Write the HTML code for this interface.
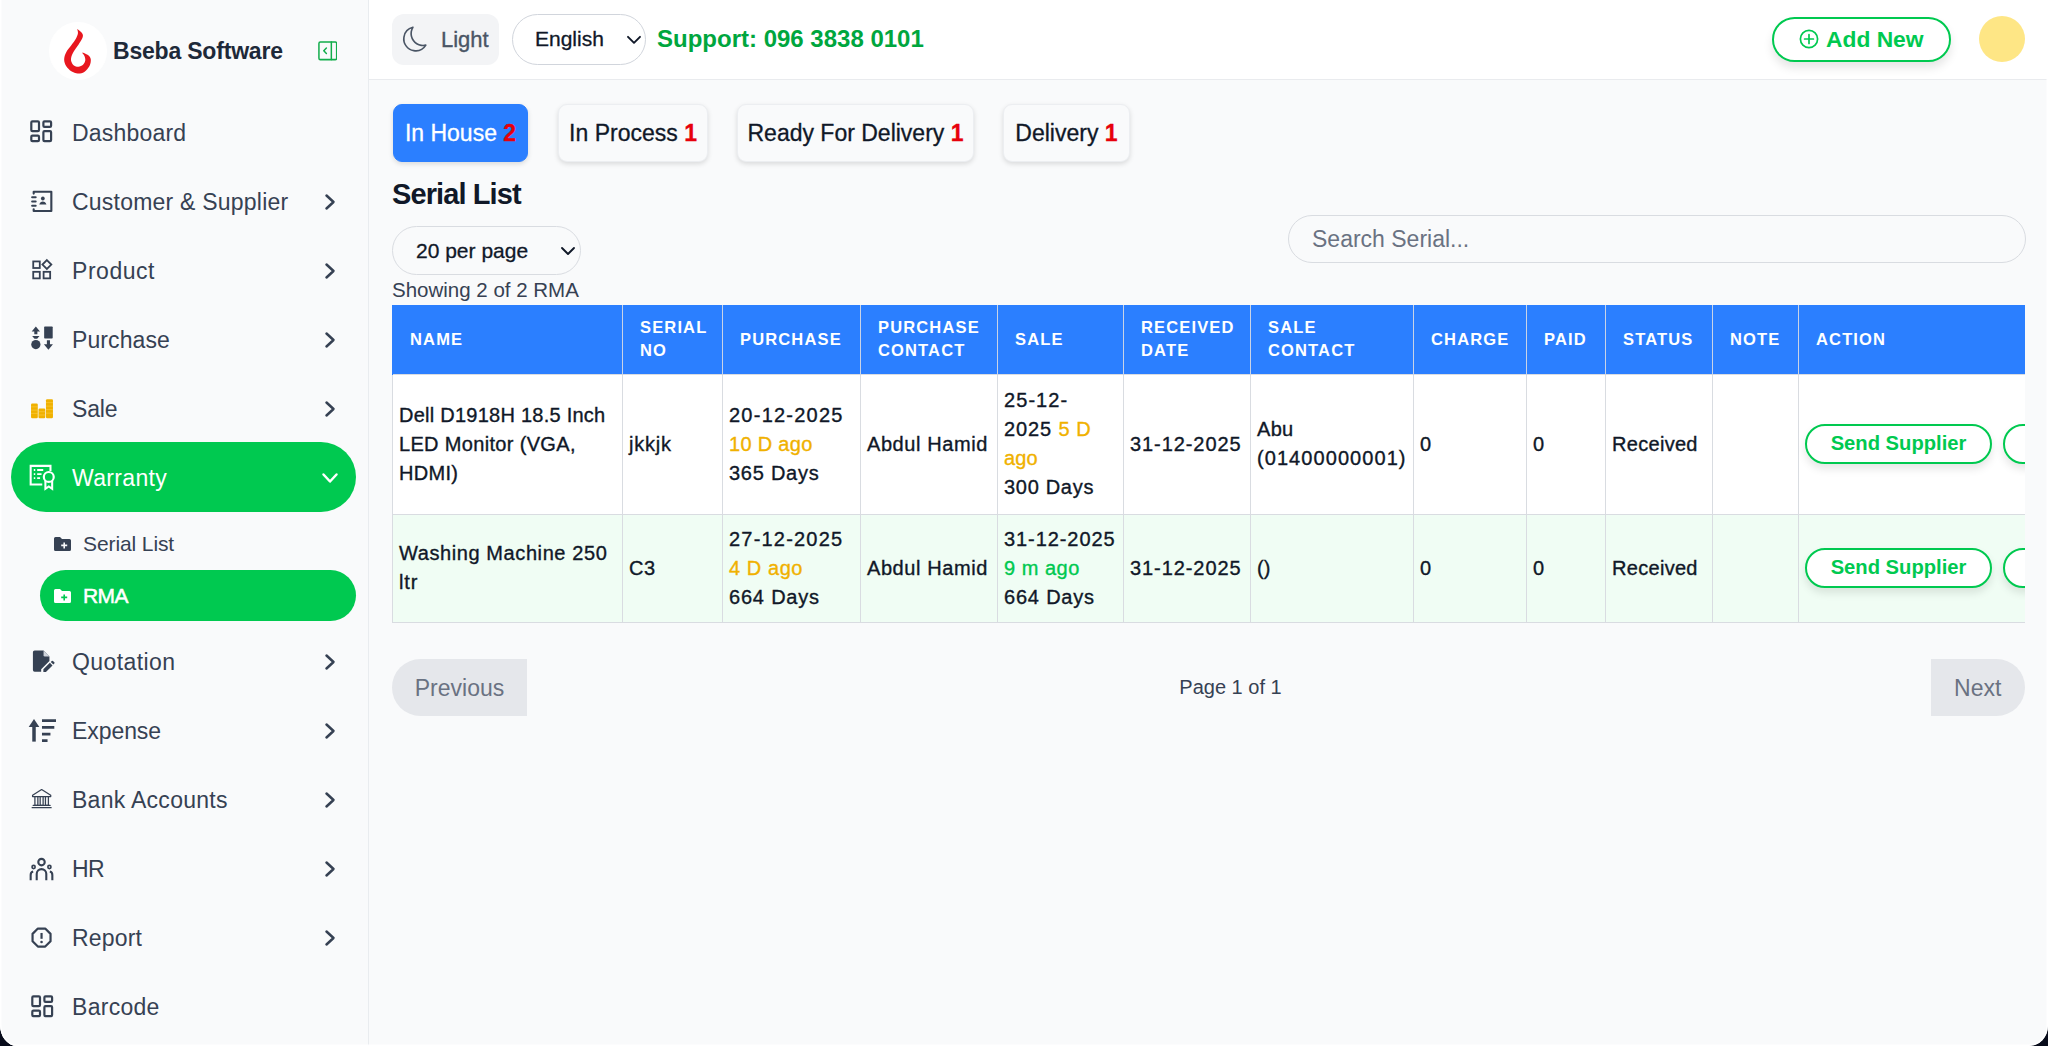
<!DOCTYPE html>
<html lang="en">
<head>
<meta charset="utf-8">
<title>Bseba Software - RMA</title>
<style>
*{box-sizing:border-box;margin:0;padding:0}
html,body{width:2048px;height:1046px;overflow:hidden;background:#080c1b}
body{font-family:"Liberation Sans",sans-serif;color:#101828;position:relative}
#win{position:absolute;left:0;top:0;width:2048px;height:1046px;background:#f9fafb;border-radius:0 0 19px 17px / 0 0 20px 21px;overflow:hidden}
#ring{position:absolute;left:0;top:-30px;width:2048px;height:1076px;border-radius:0 0 19px 17px / 0 0 20px 21px;box-shadow:inset 0 0 0 1.500px rgba(255,255,255,.95);pointer-events:none;z-index:50}
.abs{position:absolute}
/* ---------- sidebar ---------- */
#side{position:absolute;left:0;top:0;width:369px;height:1046px;background:#f9fafb;border-right:1.200px solid #e9ecef}
#logo{position:absolute;left:49px;top:22.300px;width:57.500px;height:57.500px;border-radius:50%;background:#fff}
#brand{position:absolute;left:113px;top:36px;font-size:23px;font-weight:700;color:#1e2939;line-height:30px;white-space:nowrap;letter-spacing:-0.2px}
.mi{position:absolute;left:11px;width:345px;height:69px;border-radius:35px;color:#364153}
.mi .t{position:absolute;left:61px;top:0;line-height:69px;font-size:23px;white-space:nowrap}
.mi svg.ic{position:absolute;left:17px;top:21px;width:28px;height:28px}
.mi svg.ch{position:absolute;left:311px;top:26px;width:16px;height:18px}
.mi.on{background:#00c950;color:#fff}
.sub{position:absolute;left:40px;width:316px;height:51px;border-radius:26px;color:#364153}
.sub .t{position:absolute;left:43px;top:0;line-height:52px;font-size:21px;white-space:nowrap}
.sub svg{position:absolute;left:13.500px;top:18.500px;width:17px;height:14px}
.sub.on{background:#00c950;color:#fff}
/* ---------- header ---------- */
#top{position:absolute;left:369px;top:0;width:1679px;height:80.300px;background:#fff;border-bottom:1.300px solid #e9ebee}
#light{position:absolute;left:392px;top:14px;width:107px;height:51px;border-radius:12px;background:#f3f4f6}
#light svg{position:absolute;left:8.200px;top:10.800px;width:29.300px;height:29.300px}
#light span{position:absolute;left:49px;top:0;line-height:51px;font-size:22px;color:#4a5565;font-weight:400;-webkit-text-stroke:.35px}
#lang{position:absolute;left:512px;top:14px;width:134px;height:51px;border-radius:26px;border:1.5px solid #d1d5dc;background:#fff}
#lang svg{position:absolute;left:112.500px;top:20px;width:16px;height:10px}
#lang span{position:absolute;left:22px;top:0;line-height:48px;font-size:21px;color:#101828;-webkit-text-stroke:.3px}
#support{position:absolute;left:657px;top:0;line-height:78px;font-size:24px;font-weight:700;color:#00a63e;white-space:nowrap}
#addnew{position:absolute;left:1772px;top:17px;width:179px;height:45px;border-radius:23px;border:2.500px solid #00c950;background:#fff;box-shadow:0 6px 10px rgba(0,0,0,.10)}
#addnew svg{position:absolute;left:24.500px;top:9.500px;width:20px;height:20px}
#addnew span{position:absolute;left:52px;top:0;line-height:40px;font-size:22.800px;font-weight:700;color:#00c950;white-space:nowrap}
#avatar{position:absolute;left:1979px;top:16px;width:46px;height:46px;border-radius:50%;background:#fee685}
/* ---------- main ---------- */
.tab{position:absolute;top:104px;height:58px;border-radius:9px;background:#f9fafb;border:1px solid #eceef1;box-shadow:0 2px 5px rgba(0,0,0,.13);text-align:center;white-space:nowrap}
.tab span{line-height:56px;font-size:23px;color:#101828;-webkit-text-stroke:.3px}
.tab b{color:#e7000b;font-weight:700}
.tab.on{background:#2b7fff;border-color:#2b7fff}
.tab.on span{color:#fff}
#h1{position:absolute;left:392px;top:174px;line-height:40px;font-size:29px;font-weight:700;color:#101828;white-space:nowrap;letter-spacing:-.9px}
#perpage{position:absolute;left:392px;top:226px;width:189px;height:49px;border-radius:25px;border:1.5px solid #d9dce1;background:#f9fafb}
#perpage span{position:absolute;left:23px;top:0;line-height:47px;font-size:21px;color:#101828;-webkit-text-stroke:.3px}
#perpage svg{position:absolute;left:167px;top:19px;width:16px;height:10px}
#search{position:absolute;left:1288px;top:215px;width:738px;height:48px;border-radius:24px;border:1.5px solid #d9dce1;background:#f9fafb}
#search span{position:absolute;left:23px;top:0;line-height:46px;font-size:23px;color:#6a7282}
#showing{position:absolute;left:392px;top:276px;line-height:28px;font-size:20.500px;color:#364153;white-space:nowrap}
#twrap{position:absolute;left:392px;top:305px;width:1633px;height:320px;overflow:hidden}
#tbl{border-collapse:collapse;table-layout:fixed;width:1826px}
#tbl th{background:#2b7fff;color:#fff;height:69px;text-align:left;vertical-align:middle;padding:0 6px 0 17px;font-size:16.500px;font-weight:700;letter-spacing:1.150px;line-height:23px;border-left:1.5px solid #c9d3e6;border-right:1.5px solid #c9d3e6}
#tbl th:first-child{border-left:1.5px solid #2b7fff}
#tbl td{border:1.5px solid #d9dce1;padding:0 4px 0 6px;font-size:20px;line-height:29px;color:#101828;vertical-align:middle;white-space:nowrap;-webkit-text-stroke:.35px}
#tbl tr.r1 td{height:140px;background:#fff}
#tbl tr.r2 td{height:108px;background:#f0fdf4}
#tbl i{font-style:normal}
#tbl i.y{color:#f0b100}
#tbl i.g{color:#00c950}
#tbl td.act{padding-left:6px}
.btn{display:inline-block;vertical-align:middle;width:187px;height:39.500px;border-radius:20px;border:2.300px solid #00c950;background:#fff;color:#00c950;font-weight:700;font-size:20.200px;line-height:35px;-webkit-text-stroke:0;text-align:center;box-shadow:0 5px 8px rgba(0,0,0,.10)}
.btn.b2{margin-left:11px;width:120px}
#prev,#next{position:absolute;top:658.500px;height:57.500px;background:#e5e7eb;color:#6a7282;font-size:23px;text-align:center}
#prev{left:392px;width:135px;border-radius:29px 0 0 29px}
#next{left:1930.500px;width:94.500px;border-radius:0 29px 29px 0}
#prev span,#next span{line-height:59px}
#pageof{position:absolute;left:1130.500px;width:200px;text-align:center;top:673px;line-height:28px;font-size:20px;color:#364153}
</style>
</head>
<body>
<div id="win">
<div id="side">
  <div id="logo"></div>
  <svg class="abs" style="left:44px;top:18px;width:68px;height:68px" viewBox="0 0 68 68"><path fill="#e8171f" d="M33.16 11.05C33.29 11.76 34.16 13.65 33.94 15.28C33.72 16.91 32.96 18.80 31.86 20.81C30.75 22.81 28.93 25.03 27.31 27.31C25.68 29.58 23.30 32.08 22.11 34.46C20.91 36.84 20.16 39.34 20.16 41.61C20.16 43.89 20.91 46.16 22.11 48.11C23.30 50.07 25.36 52.07 27.31 53.32C29.26 54.56 31.64 55.48 33.81 55.59C35.98 55.70 38.36 55.21 40.31 53.97C42.26 52.72 44.43 50.17 45.51 48.11C46.60 46.06 46.92 43.35 46.81 41.61C46.71 39.88 45.84 38.74 44.86 37.71C43.89 36.68 42.15 35.98 40.96 35.44C39.77 34.89 38.25 34.62 37.71 34.46C38.14 35.00 39.72 36.41 40.31 37.71C40.91 39.01 41.50 40.75 41.29 42.26C41.07 43.78 40.15 45.73 39.01 46.81C37.87 47.90 35.98 48.66 34.46 48.76C32.94 48.87 31.10 48.33 29.91 47.46C28.72 46.60 27.74 44.97 27.31 43.56C26.87 42.15 26.87 40.75 27.31 39.01C27.74 37.28 28.72 35.22 29.91 33.16C31.10 31.10 33.11 28.72 34.46 26.66C35.81 24.60 37.30 22.43 38.04 20.81C38.77 19.18 39.04 18.04 38.88 16.91C38.72 15.77 38.01 14.95 37.06 13.98C36.11 13.00 33.81 11.54 33.16 11.05Z"/></svg>
  <div id="brand">Bseba Software</div>
  <svg id="toggle" class="abs" style="left:317.800px;top:41.300px;width:19.600px;height:19.600px" viewBox="0 0 21 20" preserveAspectRatio="none" fill="none" stroke="#12ad4b" stroke-width="1.600" stroke-linejoin="round" stroke-linecap="round"><rect x="1" y="1" width="19" height="18" rx="1.500"/><path d="M14.300 1v18"/><path d="M9 7.200L6.200 10L9 12.800"/></svg>
  <div class="mi" style="top:98px;height:69px"><svg class="ic" style="left:17.40px;top:20.20px;width:26.4px;height:26.4px" viewBox="0 0 24 24" fill="none" stroke="currentColor" stroke-width="2" stroke-linejoin="round"><rect x="3" y="3" width="7" height="9" rx="1"/><rect x="14" y="3" width="7" height="5" rx="1"/><rect x="14" y="12" width="7" height="9" rx="1"/><rect x="3" y="16" width="7" height="5" rx="1"/></svg><span class="t" style="line-height:71px;letter-spacing:0.19px">Dashboard</span></div>
  <div class="mi" style="top:167px;height:69px"><svg class="ic" style="left:17.52px;top:20.65px;width:26.8px;height:26.8px" viewBox="0 0 24 24" fill="none" stroke="currentColor" stroke-width="1.9" stroke-linecap="round" stroke-linejoin="round"><path d="M4.200 5V3.400H20v17.200H4.200V19"/><path d="M2.800 8.200h3.200M2.800 12h3.200M2.800 15.800h3.200" stroke-width="1.800"/><circle cx="12.400" cy="9.400" r="1.700" fill="currentColor" stroke="none"/><path d="M9.200 14.800c.500-2 1.700-2.800 3.200-2.800s2.700.800 3.200 2.800z" fill="currentColor" stroke="none"/></svg><span class="t" style="line-height:71px;letter-spacing:0.22px">Customer &amp; Supplier</span><svg class="ch" viewBox="0 0 16 18" fill="none" stroke="currentColor" stroke-width="2.5" stroke-linecap="round" stroke-linejoin="round"><path d="M4.5 2.5L11.5 9L4.500 15.500"/></svg></div>
  <div class="mi" style="top:236px;height:69px"><svg class="ic" style="left:17.62px;top:21.43px;width:25.4px;height:25.4px" viewBox="0 0 24 24" fill="none" stroke="currentColor" stroke-width="1.700" stroke-linejoin="miter"><rect x="4" y="4.200" width="6.200" height="6.200"/><rect x="4" y="14" width="6.200" height="6.200"/><rect x="13.800" y="14" width="6.200" height="6.200"/><path d="M16.900 2.900l4.200 4.200-4.200 4.200-4.200-4.200z"/></svg><span class="t" style="line-height:71px;letter-spacing:0.54px">Product</span><svg class="ch" viewBox="0 0 16 18" fill="none" stroke="currentColor" stroke-width="2.5" stroke-linecap="round" stroke-linejoin="round"><path d="M4.5 2.5L11.5 9L4.500 15.500"/></svg></div>
  <div class="mi" style="top:305px;height:69px"><svg class="ic" style="left:16.65px;top:19.37px;width:28.5px;height:28.5px" viewBox="0 0 24 24" fill="currentColor" stroke="none"><path d="M6.600 2.200l3.500 4.100H7.900v2.300H5.300V6.300H3.100z"/><path d="M3.500 10h6.200l-2 2.500h-2.200z"/><circle cx="6.600" cy="17.300" r="3.900"/><rect x="13.600" y="2.200" width="7.200" height="10" rx=".600"/><path d="M15.900 13.600h2.600v3.400h2.500l-3.800 4.600-3.800-4.600h2.500z"/></svg><span class="t" style="line-height:71px;letter-spacing:0.10px">Purchase</span><svg class="ch" viewBox="0 0 16 18" fill="none" stroke="currentColor" stroke-width="2.5" stroke-linecap="round" stroke-linejoin="round"><path d="M4.5 2.5L11.5 9L4.500 15.500"/></svg></div>
  <div class="mi" style="top:374px;height:69px"><svg class="ic" style="left:16.75px;top:19.60px;width:28.0px;height:28.0px" viewBox="0 0 24 24" fill="#f0b100" stroke="none"><rect x="2.600" y="8.200" width="5.800" height="12.600" rx="1"/><rect x="9" y="12.400" width="5.800" height="8.400" rx="1"/><rect x="15.400" y="4.400" width="6" height="16.400" rx="1"/><g stroke="#ffd966" stroke-width=".5" opacity=".75"><path d="M2.600 11h5.800M2.600 13.800h5.800M2.600 16.600h5.800M9 15.200h5.800M9 18h5.800M15.400 7.400h6M15.400 10.400h6M15.400 13.400h6M15.400 16.400h6"/></g></svg><span class="t" style="line-height:71px;letter-spacing:-0.20px">Sale</span><svg class="ch" viewBox="0 0 16 18" fill="none" stroke="currentColor" stroke-width="2.5" stroke-linecap="round" stroke-linejoin="round"><path d="M4.5 2.5L11.5 9L4.500 15.500"/></svg></div>
  <div class="mi on" style="top:442px;height:70px"><svg class="ic" style="left:16.94px;top:20.04px;width:29.0px;height:29.0px" viewBox="0 0 24 24" fill="none" stroke="currentColor" stroke-width="1.700" stroke-linejoin="miter"><path d="M11.800 18.600H2.200V3.200h16.400v4.200"/><path d="M4.800 6.600h1.200M7.600 6.600h5M4.800 10h1.200M7.600 10h3.600M4.800 13.400h1.200M7.600 13.400h2.400" stroke-width="1.500"/><circle cx="17.200" cy="12.400" r="4.100" stroke-width="1.800"/><path d="M14.400 15.800v6.400l2.800-2 2.800 2v-6.400" stroke-width="1.700"/></svg><span class="t" style="line-height:72px;letter-spacing:0.33px">Warranty</span><svg class="ch" viewBox="0 0 18 16" style="left:310px;top:27.500px;width:18px;height:16px" fill="none" stroke="currentColor" stroke-width="2.500" stroke-linecap="round" stroke-linejoin="round"><path d="M2.500 4.500L9 11.500L15.500 4.500"/></svg></div>
  <div class="sub" style="top:518px"><svg viewBox="0 0 17 14" fill="currentColor" fill-rule="evenodd"><path d="M1.500 0H6L8 2H15.500A1.500 1.500 0 0 1 17 3.500V12.500A1.500 1.500 0 0 1 15.500 14H1.500A1.500 1.500 0 0 1 0 12.500V1.500A1.500 1.500 0 0 1 1.500 0ZM9.400 5.400h1.600v2.200h2.200v1.600h-2.200v2.200h-1.600v-2.200h-2.200v-1.600h2.200z"/></svg><span class="t" style="letter-spacing:-.1px">Serial List</span></div>
  <div class="sub on" style="top:570px"><svg viewBox="0 0 17 14" fill="currentColor" fill-rule="evenodd"><path d="M1.500 0H6L8 2H15.500A1.500 1.500 0 0 1 17 3.500V12.500A1.500 1.500 0 0 1 15.500 14H1.500A1.500 1.500 0 0 1 0 12.500V1.500A1.500 1.500 0 0 1 1.500 0ZM9.400 5.400h1.600v2.200h2.200v1.600h-2.200v2.200h-1.600v-2.200h-2.200v-1.600h2.200z"/></svg><span class="t" style="letter-spacing:-.6px;-webkit-text-stroke:.5px #fff">RMA</span></div>
  <div class="mi" style="top:627px;height:69px"><svg class="ic" style="left:17.71px;top:21.38px;width:26.1px;height:26.1px" viewBox="0 0 24 24" fill="currentColor" stroke="none"><path d="M5.200 2.400h8.200l5.400 5.400v4.200l-7.600 7.600v2.200H5.200a1.600 1.600 0 0 1-1.600-1.600V4a1.600 1.600 0 0 1 1.600-1.600z"/><path d="M13.400 2.400l5.400 5.400h-4.200a1.200 1.200 0 0 1-1.200-1.200z" fill="#cfd4dc"/><path d="M13.200 22v-2.400l6-6 2.400 2.400-6 6z"/><path d="M20 12.800l.9-.9a.8.800 0 0 1 1.100 0l1.300 1.300a.8.800 0 0 1 0 1.100l-.9.900z"/></svg><span class="t" style="line-height:71px;letter-spacing:0.40px">Quotation</span><svg class="ch" viewBox="0 0 16 18" fill="none" stroke="currentColor" stroke-width="2.5" stroke-linecap="round" stroke-linejoin="round"><path d="M4.5 2.5L11.5 9L4.500 15.500"/></svg></div>
  <div class="mi" style="top:696px;height:69px"><svg class="ic" style="left:15.88px;top:19.94px;width:29.0px;height:29.0px" viewBox="0 0 24 24" fill="none" stroke="currentColor" stroke-width="2.100" stroke-linecap="butt"><path d="M5.800 21.200V6" stroke-width="2.900"/><path d="M1.400 9.200l4.400-6.800 4.400 6.800z" fill="currentColor" stroke="none"/><path d="M12.400 3.900h13.200M12.400 9.500h10.200M12.400 15h7M12.400 20.300h4.600" stroke-width="2.300"/></svg><span class="t" style="line-height:71px;letter-spacing:-0.07px">Expense</span><svg class="ch" viewBox="0 0 16 18" fill="none" stroke="currentColor" stroke-width="2.5" stroke-linecap="round" stroke-linejoin="round"><path d="M4.5 2.5L11.5 9L4.500 15.500"/></svg></div>
  <div class="mi" style="top:765px;height:69px"><svg class="ic" style="left:18.10px;top:21.35px;width:25.3px;height:25.3px" viewBox="0 0 24 24" fill="none" stroke="currentColor" stroke-width="1.200" stroke-linejoin="round"><path d="M3.400 8.800L12 3.400l8.600 5.400v1.200H3.400z"/><path d="M5.600 10.200v8.200h2.800v-8.200M10.600 10.200v8.200h2.800v-8.200M15.600 10.200v8.200h2.800v-8.200"/><path d="M4 18.400h16M3 20.600h18" stroke-linecap="round"/></svg><span class="t" style="line-height:71px;letter-spacing:0.28px">Bank Accounts</span><svg class="ch" viewBox="0 0 16 18" fill="none" stroke="currentColor" stroke-width="2.5" stroke-linecap="round" stroke-linejoin="round"><path d="M4.5 2.5L11.5 9L4.500 15.500"/></svg></div>
  <div class="mi" style="top:834px;height:69px"><svg class="ic" style="left:18.30px;top:22.60px;width:25.0px;height:25.0px" viewBox="0 0 24 24" fill="none" stroke="currentColor" stroke-width="2" stroke-linecap="butt"><circle cx="12" cy="4.900" r="3.100"/><path d="M7.400 22.400v-6.200a4.600 4.600 0 0 1 9.200 0v6.200"/><circle cx="4.400" cy="9.600" r="1.500" stroke-width="1.600"/><circle cx="19.600" cy="9.600" r="1.500" stroke-width="1.600"/><path d="M1.600 22.400v-5.200a3.300 3.300 0 0 1 2.400-3.200M22.400 22.400v-5.200a3.300 3.300 0 0 0-2.400-3.200"/></svg><span class="t" style="line-height:71px;letter-spacing:-0.70px">HR</span><svg class="ch" viewBox="0 0 16 18" fill="none" stroke="currentColor" stroke-width="2.5" stroke-linecap="round" stroke-linejoin="round"><path d="M4.5 2.5L11.5 9L4.500 15.500"/></svg></div>
  <div class="mi" style="top:903px;height:69px"><svg class="ic" style="left:18.25px;top:22.35px;width:25.1px;height:25.1px" viewBox="0 0 24 24" fill="none" stroke="currentColor" stroke-width="1.900" stroke-linejoin="round"><path d="M8.500 3.400h7l5.100 5.100v7l-5.100 5.100h-7l-5.100-5.100v-7z" stroke-width="2.100"/><path d="M12 7.600v5.600" stroke-width="2.100"/><circle cx="12" cy="16.200" r="1.250" fill="currentColor" stroke="none"/></svg><span class="t" style="line-height:71px;letter-spacing:0.17px">Report</span><svg class="ch" viewBox="0 0 16 18" fill="none" stroke="currentColor" stroke-width="2.5" stroke-linecap="round" stroke-linejoin="round"><path d="M4.5 2.5L11.5 9L4.500 15.500"/></svg></div>
  <div class="mi" style="top:972px;height:69px"><svg class="ic" style="left:17.60px;top:21.45px;width:26.4px;height:26.4px" viewBox="0 0 24 24" fill="none" stroke="currentColor" stroke-width="2" stroke-linejoin="round"><rect x="3" y="3" width="7" height="9" rx="1"/><rect x="14" y="3" width="7" height="5" rx="1"/><rect x="14" y="12" width="7" height="9" rx="1"/><rect x="3" y="16" width="7" height="5" rx="1"/></svg><span class="t" style="line-height:71px;letter-spacing:0.29px">Barcode</span></div>
</div>
<div id="top"></div>
<div id="light"><svg viewBox="0 0 24 24" fill="none" stroke="#4a5565" stroke-width="1.35" stroke-linecap="round" stroke-linejoin="round"><path transform="rotate(9 12 12)" d="M21.752 15.002A9.718 9.718 0 0118 15.75c-5.385 0-9.750-4.365-9.750-9.750 0-1.330.266-2.597.748-3.752A9.753 9.753 0 003 11.250C3 16.635 7.365 21 12.750 21a9.753 9.753 0 009.002-5.998z"/></svg><span>Light</span></div>
<div id="lang"><span>English</span><svg viewBox="0 0 16 10" fill="none" stroke="#101828" stroke-width="1.900" stroke-linecap="round" stroke-linejoin="round"><path d="M2 1.800l6 6 6-6"/></svg></div>
<div id="support">Support: 096 3838 0101</div>
<div id="addnew"><svg viewBox="0 0 20 20" fill="none" stroke="#00c950" stroke-width="1.700" stroke-linecap="round"><circle cx="10" cy="10" r="8.600"/><path d="M10 5.600v8.800M5.600 10h8.800"/></svg><span>Add New</span></div>
<div id="avatar"></div>
<div class="tab on" style="left:393px;width:135px"><span>In House <b>2</b></span></div>
<div class="tab" style="left:558px;width:150px"><span>In Process <b>1</b></span></div>
<div class="tab" style="left:737px;width:237px"><span>Ready For Delivery <b>1</b></span></div>
<div class="tab" style="left:1003px;width:127px"><span>Delivery <b>1</b></span></div>
<div id="h1">Serial List</div>
<div id="perpage"><span>20 per page</span><svg viewBox="0 0 16 10" fill="none" stroke="#101828" stroke-width="1.9" stroke-linecap="round" stroke-linejoin="round"><path d="M2 2l6 6 6-6"/></svg></div>
<div id="search"><span>Search Serial...</span></div>
<div id="showing">Showing 2 of 2 RMA</div>
<div id="twrap">
<table id="tbl">
<colgroup><col style="width:230px"><col style="width:100px"><col style="width:138px"><col style="width:137px"><col style="width:126px"><col style="width:127px"><col style="width:163px"><col style="width:113px"><col style="width:79px"><col style="width:107px"><col style="width:86px"><col style="width:420px"></colgroup>
<thead><tr><th>NAME</th><th>SERIAL<br>NO</th><th>PURCHASE</th><th>PURCHASE<br>CONTACT</th><th>SALE</th><th>RECEIVED<br>DATE</th><th>SALE<br>CONTACT</th><th>CHARGE</th><th>PAID</th><th>STATUS</th><th>NOTE</th><th>ACTION</th></tr></thead>
<tbody>
<tr class="r1"><td><i style="letter-spacing:0.25px">Dell D1918H 18.5 Inch</i><br><i style="letter-spacing:0.33px">LED Monitor (VGA,</i><br><i style="letter-spacing:0.30px">HDMI)</i></td><td><i style="letter-spacing:0.80px">jkkjk</i></td><td><i style="letter-spacing:1.24px">20-12-2025</i><br><i class="y" style="letter-spacing:0.30px">10 D ago</i><br><i style="letter-spacing:0.75px">365 Days</i></td><td><i style="letter-spacing:0.58px">Abdul Hamid</i></td><td><i style="letter-spacing:1.07px">25-12-</i><br><i style="letter-spacing:0.90px">2025 </i><i class="y" style="letter-spacing:0.50px">5 D</i><br><i class="y" style="letter-spacing:0.10px">ago</i><br><i style="letter-spacing:0.70px">300 Days</i></td><td><i style="letter-spacing:0.92px">31-12-2025</i></td><td><i style="letter-spacing:0.30px">Abu</i><br><i style="letter-spacing:1.07px">(01400000001)</i></td><td>0</td><td>0</td><td><i style="letter-spacing:0.30px">Received</i></td><td></td><td class="act"><div class="btn">Send Supplier</div><div class="btn b2"></div></td></tr>
<tr class="r2"><td><i style="letter-spacing:0.59px">Washing Machine 250</i><br><i style="letter-spacing:0.90px">ltr</i></td><td><i style="letter-spacing:0.50px">C3</i></td><td><i style="letter-spacing:1.20px">27-12-2025</i><br><i class="y" style="letter-spacing:0.57px">4 D ago</i><br><i style="letter-spacing:0.80px">664 Days</i></td><td><i style="letter-spacing:0.58px">Abdul Hamid</i></td><td><i style="letter-spacing:0.92px">31-12-2025</i><br><i class="g" style="letter-spacing:0.50px">9 m ago</i><br><i style="letter-spacing:0.80px">664 Days</i></td><td><i style="letter-spacing:0.92px">31-12-2025</i></td><td>()</td><td>0</td><td>0</td><td><i style="letter-spacing:0.30px">Received</i></td><td></td><td class="act"><div class="btn">Send Supplier</div><div class="btn b2"></div></td></tr>
</tbody>
</table>
</div>
<div id="prev"><span>Previous</span></div>
<div id="pageof">Page 1 of 1</div>
<div id="next"><span>Next</span></div>
<div id="ring"></div>
<!--MAIN-->
</div>
</body>
</html>
